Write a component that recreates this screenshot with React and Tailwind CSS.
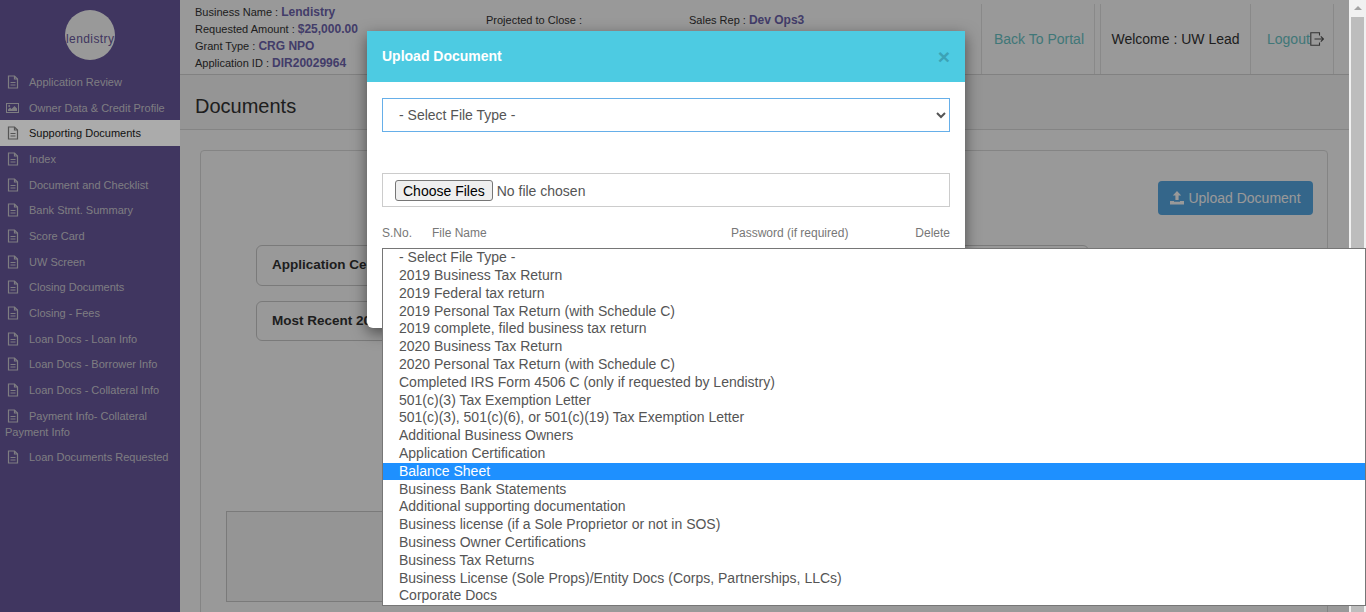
import React from 'react';

const navItems = [
  { label: 'Application Review' },
  { label: 'Owner Data & Credit Profile', icon: 'image' },
  { label: 'Supporting Documents', active: true },
  { label: 'Index' },
  { label: 'Document and Checklist' },
  { label: 'Bank Stmt. Summary' },
  { label: 'Score Card' },
  { label: 'UW Screen' },
  { label: 'Closing Documents' },
  { label: 'Closing - Fees' },
  { label: 'Loan Docs - Loan Info' },
  { label: 'Loan Docs - Borrower Info' },
  { label: 'Loan Docs - Collateral Info' },
  { label: 'Payment Info- Collateral Payment Info' },
  { label: 'Loan Documents Requested' },
];

const fileTypes = [
  '- Select File Type -',
  '2019 Business Tax Return',
  '2019 Federal tax return',
  '2019 Personal Tax Return (with Schedule C)',
  '2019 complete, filed business tax return',
  '2020 Business Tax Return',
  '2020 Personal Tax Return (with Schedule C)',
  'Completed IRS Form 4506 C (only if requested by Lendistry)',
  '501(c)(3) Tax Exemption Letter',
  '501(c)(3), 501(c)(6), or 501(c)(19) Tax Exemption Letter',
  'Additional Business Owners',
  'Application Certification',
  'Balance Sheet',
  'Business Bank Statements',
  'Additional supporting documentation',
  'Business license (if a Sole Proprietor or not in SOS)',
  'Business Owner Certifications',
  'Business Tax Returns',
  'Business License (Sole Props)/Entity Docs (Corps, Partnerships, LLCs)',
  'Corporate Docs',
];

const DocIcon = ({ active }) => (
  <svg
    viewBox="0 0 12 14"
    className={active
      ? 'inline-block w-[12px] h-[14px] ml-[2px] mr-[10px] align-[-3px] text-[#555]'
      : 'inline-block w-[12px] h-[14px] ml-[2px] mr-[10px] align-[-3px]'}
    fill="none"
    stroke="currentColor"
    strokeWidth="1.2"
  >
    <path d="M1.5 1h6l3 3v9h-9z" />
    <path d="M7.5 1v3h3M3.5 7.5h5M3.5 10h5" />
  </svg>
);

const ImageIcon = () => (
  <svg viewBox="0 0 13 10" className="inline-block w-[13px] h-[10px] ml-px mr-[10px] align-[-1px]">
    <path fill="currentColor" fillRule="evenodd" d="M0 0h13v10H0zM1 1v8h11V1z" />
    <path fill="currentColor" d="M2 8V6.5L4 4.5l1.5 1.5L8.5 3 11 5.5V8z" />
    <circle cx="3.2" cy="3" r="1" fill="currentColor" />
  </svg>
);

const LogoutIcon = () => (
  <svg viewBox="0 0 14 14" className="w-[14px] h-[14px]" fill="none" stroke="currentColor" strokeWidth="1.1">
    <path d="M9.5 3.5V.8H.8v12.4h8.7v-2.7" />
    <path d="M4.5 7h9M10.8 4.4L13.4 7l-2.6 2.6" />
  </svg>
);

const UploadIcon = () => (
  <svg viewBox="0 0 14 14" className="w-[14px] h-[14px]" fill="currentColor">
    <path d="M7 0l4.2 4.5H8.6V9H5.4V4.5H2.8z" />
    <path d="M0 10h4v.8h6V10h4v3.5H0z" />
  </svg>
);

const Stat = ({ label, value }) => (
  <div className="h-[17px] leading-[17px] whitespace-nowrap">
    {label} : <span className="text-[12px] font-bold text-[#6f66b0]">{value}</span>
  </div>
);

const App = () => {
  return (
    <div className="relative flex h-[612px] overflow-hidden bg-white font-['Liberation_Sans',Arial,sans-serif]">
      <aside className="w-[180px] shrink-0 bg-[#6b5aa0] text-[11px] text-[#d2d0d8]">
        <div className="flex h-[69px] items-start justify-center pt-[10px]">
          <div className="flex h-[50px] w-[50px] items-center justify-center rounded-full bg-white">
            <svg viewBox="0 0 50 50" className="h-[50px] w-[50px]">
              <text x="25" y="33" textAnchor="middle" textLength="48" fontSize="12" fontFamily="Liberation Sans" fill="#6b5aa0">lendistry</text>
            </svg>
          </div>
        </div>
        <nav>
          {navItems.map((item) => (
            <a
              key={item.label}
              className={item.active
                ? 'relative z-20 block bg-[#ababab] px-[5px] py-[4.855px] leading-[16px] text-[#111]'
                : 'block px-[5px] py-[4.855px] leading-[16px]'}
            >
              {item.icon === 'image' ? <ImageIcon /> : <DocIcon active={item.active} />}
              {item.label}
            </a>
          ))}
        </nav>
      </aside>

      <main className="flex min-w-0 flex-1 flex-col bg-white">
        <header className="flex h-[75px] shrink-0 border-b border-[#d8d8d8] text-[11px] text-[#333]">
          <div className="w-[306px] shrink-0 pl-[15px] pt-[4px]">
            <Stat label="Business Name" value="Lendistry" />
            <Stat label="Requested Amount" value="$25,000.00" />
            <Stat label="Grant Type" value="CRG NPO" />
            <Stat label="Application ID" value="DIR20029964" />
          </div>
          <div className="w-[203px] shrink-0 pt-[12px] leading-[17px]">Projected to Close :</div>
          <div className="w-[292px] shrink-0 pt-[12px]">
            <Stat label="Sales Rep" value="Dev Ops3" />
          </div>
          <div className="mt-[4px] flex text-[14px]">
            <a className="flex w-[114px] items-center justify-center border-x border-[#e4e4e4] pl-[2px] text-[#6bc7c9]">Back To Portal</a>
            <div className="w-[5px]" />
            <div className="flex w-[151px] items-center justify-center border-x border-[#e4e4e4] text-[#333]">Welcome : UW Lead</div>
            <a className="flex w-[83px] items-center border-r border-[#e4e4e4] pl-[16px] text-[#6bc7c9]">
              Logout
              <span className="text-[#555]"><LogoutIcon /></span>
            </a>
          </div>
        </header>

        <div className="flex h-[55px] shrink-0 items-center border-b border-[#dcdcdc] bg-[#f8f8f8] pl-[15px] pt-[8px] text-[20px] text-[#333]">
          Documents
        </div>

        <div className="min-h-0 flex-1 pl-[20px] pr-[21px] pt-[20px]">
          <section className="h-[500px] rounded-[4px] border border-[#ddd] pt-[30px]">
            <div className="flex justify-end pr-[14px]">
              <button className="flex h-[34px] w-[155px] items-center justify-center gap-[4px] rounded-[4px] bg-[#58aae6] text-[14px] text-white">
                <UploadIcon />
                Upload Document
              </button>
            </div>
            <div className="ml-[55px] mt-[30px] w-[833px] space-y-[15px] text-[13.5px] font-bold text-[#333]">
              <div className="flex h-[41px] items-center rounded-[6px] border border-[#ccc] pb-[1px] pl-[15px]">Application Certification</div>
              <div className="flex h-[40px] items-center rounded-[6px] border border-[#ccc] pl-[15px]">Most Recent 2019 Business Tax Return</div>
            </div>
            <div className="ml-[25px] mt-[170px] h-[91px] w-[900px] border border-[#ccc] bg-[#f8f8f8]" />
          </section>
        </div>
      </main>

      {/* Scrollbar */}
      <div className="relative z-20 flex w-[17px] shrink-0 flex-col items-center bg-[#f1f1f1] pt-[6px]">
        <div className="h-0 w-0 border-x-[4px] border-b-[4px] border-x-transparent border-b-[#a3a3a3]" />
        <div className="mt-[7px] w-[13px] flex-1 bg-[#bdbdbd]" />
      </div>

      {/* Backdrop */}
      <div className="absolute bottom-0 left-0 right-[17px] top-0 z-10 bg-black/40" />

      {/* Upload modal */}
      <div className="absolute left-[367px] top-[31px] z-30 h-[297px] w-[598px] overflow-hidden rounded-b-[6px] bg-white shadow-[0_5px_15px_rgba(0,0,0,0.5)]">
        <div className="flex h-[51px] items-center justify-between bg-[#4dcbe2] pl-[15px] pr-[15px]">
          <h4 className="text-[14px] font-bold text-white">Upload Document</h4>
          <span className="text-[21px] font-bold leading-none text-[#3ca3b6]">×</span>
        </div>
        <div className="px-[15px] pt-[16px]">
          <select className="h-[34px] w-full border border-[#66afe9] bg-white pl-[12px] text-[14px] text-[#555]">
            <option>- Select File Type -</option>
          </select>
          <div className="mt-[41px] flex h-[34px] items-center border border-[#ccc] pl-[12px] pt-[1px] text-[14px] text-[#555]">
            <input
              type="file"
              multiple
              className="w-full text-[14px] file:mr-[4px] file:h-[21px] file:rounded-[3px] file:border file:border-[#767676] file:bg-[#efefef] file:px-[7px] file:text-[14px] file:text-black"
            />
          </div>
          <div className="mt-[19px] flex text-[12px] leading-[14px] text-[#777]">
            <span className="w-[50px]">S.No.</span>
            <span className="w-[299px]">File Name</span>
            <span className="flex-1">Password (if required)</span>
            <span>Delete</span>
          </div>
        </div>
      </div>

      {/* Open select list */}
      <ul className="absolute bottom-[6px] left-[382px] right-0 top-[248px] z-40 flex flex-col border border-[#767676] bg-white text-[14px] text-[#555]">
        {fileTypes.map((type) => (
          <li
            key={type}
            className={type === 'Balance Sheet'
              ? 'flex h-[17.8px] items-center bg-[#1e90ff] pb-[0.5px] pl-[16px] text-white'
              : 'flex h-[17.8px] items-center pb-[0.5px] pl-[16px]'}
          >
            {type}
          </li>
        ))}
      </ul>
    </div>
  );
};

export default App;
